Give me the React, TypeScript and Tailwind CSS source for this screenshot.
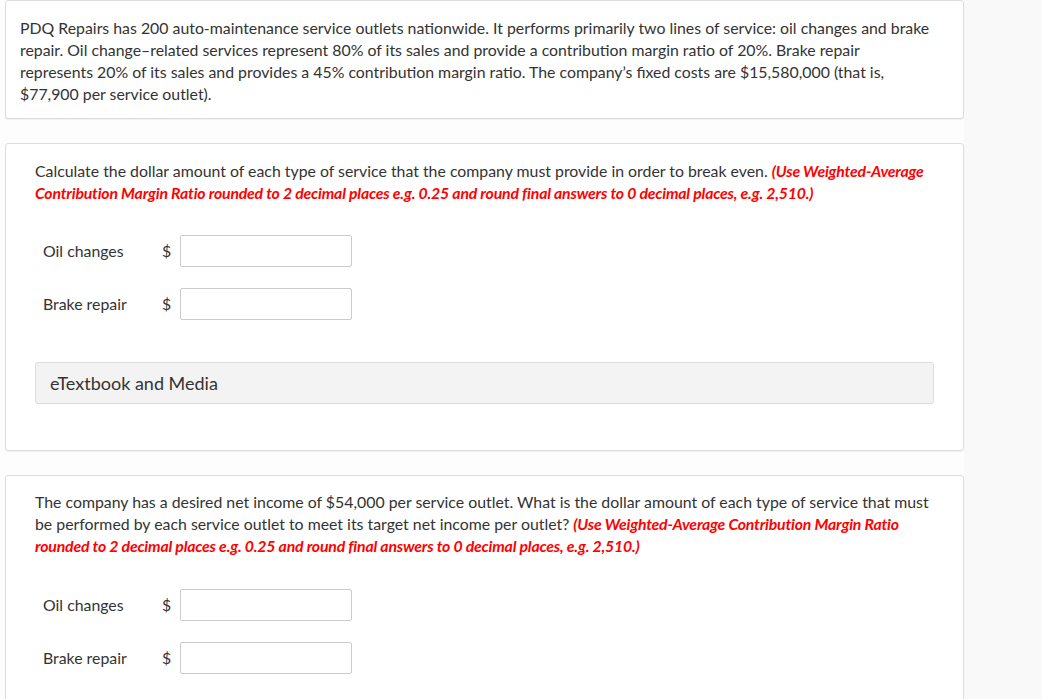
import React from 'react';

const redNote = 'font-bold italic text-[#ff0000] tracking-[-0.2px]';

const AnswerRow = ({ label }: { label: string }) => (
  <div className="flex items-center h-8">
    <span className="w-[127px] pl-2">{label}</span>
    <span className="w-[18px]">$</span>
    <input
      type="text"
      className="w-[172px] h-8 border border-[#cccccc] rounded-[2px] bg-white outline-none"
    />
  </div>
);

const App = () => {
  return (
    <div
      className="min-h-screen bg-[#f9f9f9] text-[15.85px] leading-[22px] text-[#333333]"
      style={{ fontFamily: 'Lato, "Open Sans", sans-serif' }}
    >
      <div className="w-[964px] bg-[#fdfdfd] pl-[5px] pb-6 flex flex-col gap-6">
        <div className="border border-[#dddddd] rounded-[3px] bg-white shadow-[0_1px_1px_rgba(0,0,0,0.05)] pl-[14px] pr-[30px] pt-[16px] pb-[13px]">
          <p>
            PDQ Repairs has 200 auto-maintenance service outlets nationwide. It performs primarily two lines of service: oil changes and brake
            repair. Oil change–related services represent 80% of its sales and provide a contribution margin ratio of 20%. Brake repair
            represents 20% of its sales and provides a 45% contribution margin ratio. The company’s fixed costs are $15,580,000 (that is,
            $77,900 per service outlet).
          </p>
        </div>

        <div className="border border-[#dddddd] rounded-[3px] bg-white shadow-[0_1px_1px_rgba(0,0,0,0.05)] px-[29px] pt-[16px] pb-[46px]">
          <p>
            Calculate the dollar amount of each type of service that the company must provide in order to break even.{' '}
            <span className={redNote}>
              (Use Weighted-Average Contribution Margin Ratio rounded to 2 decimal places e.g. 0.25 and round final answers to 0 decimal places, e.g. 2,510.)
            </span>
          </p>
          <div className="mt-[31px] flex flex-col gap-[21px]">
            <AnswerRow label="Oil changes" />
            <AnswerRow label="Brake repair" />
          </div>
          <div className="mt-[42px] h-[42px] flex items-center px-[14px] bg-[#f3f3f3] border border-[#dddddd] rounded-[3px] text-[18px]">
            eTextbook and Media
          </div>
        </div>

        <div className="border border-[#dddddd] rounded-[3px] bg-white shadow-[0_1px_1px_rgba(0,0,0,0.05)] px-[29px] pt-[15px] pb-[40px]">
          <p>
            The company has a desired net income of $54,000 per service outlet. What is the dollar amount of each type of service that must
            be performed by each service outlet to meet its target net income per outlet?{' '}
            <span className={redNote}>
              (Use Weighted-Average Contribution Margin Ratio rounded to 2 decimal places e.g. 0.25 and round final answers to 0 decimal places, e.g. 2,510.)
            </span>
          </p>
          <div className="mt-[32px] flex flex-col gap-[21px]">
            <AnswerRow label="Oil changes" />
            <AnswerRow label="Brake repair" />
          </div>
        </div>
      </div>
    </div>
  );
};

export default App;
